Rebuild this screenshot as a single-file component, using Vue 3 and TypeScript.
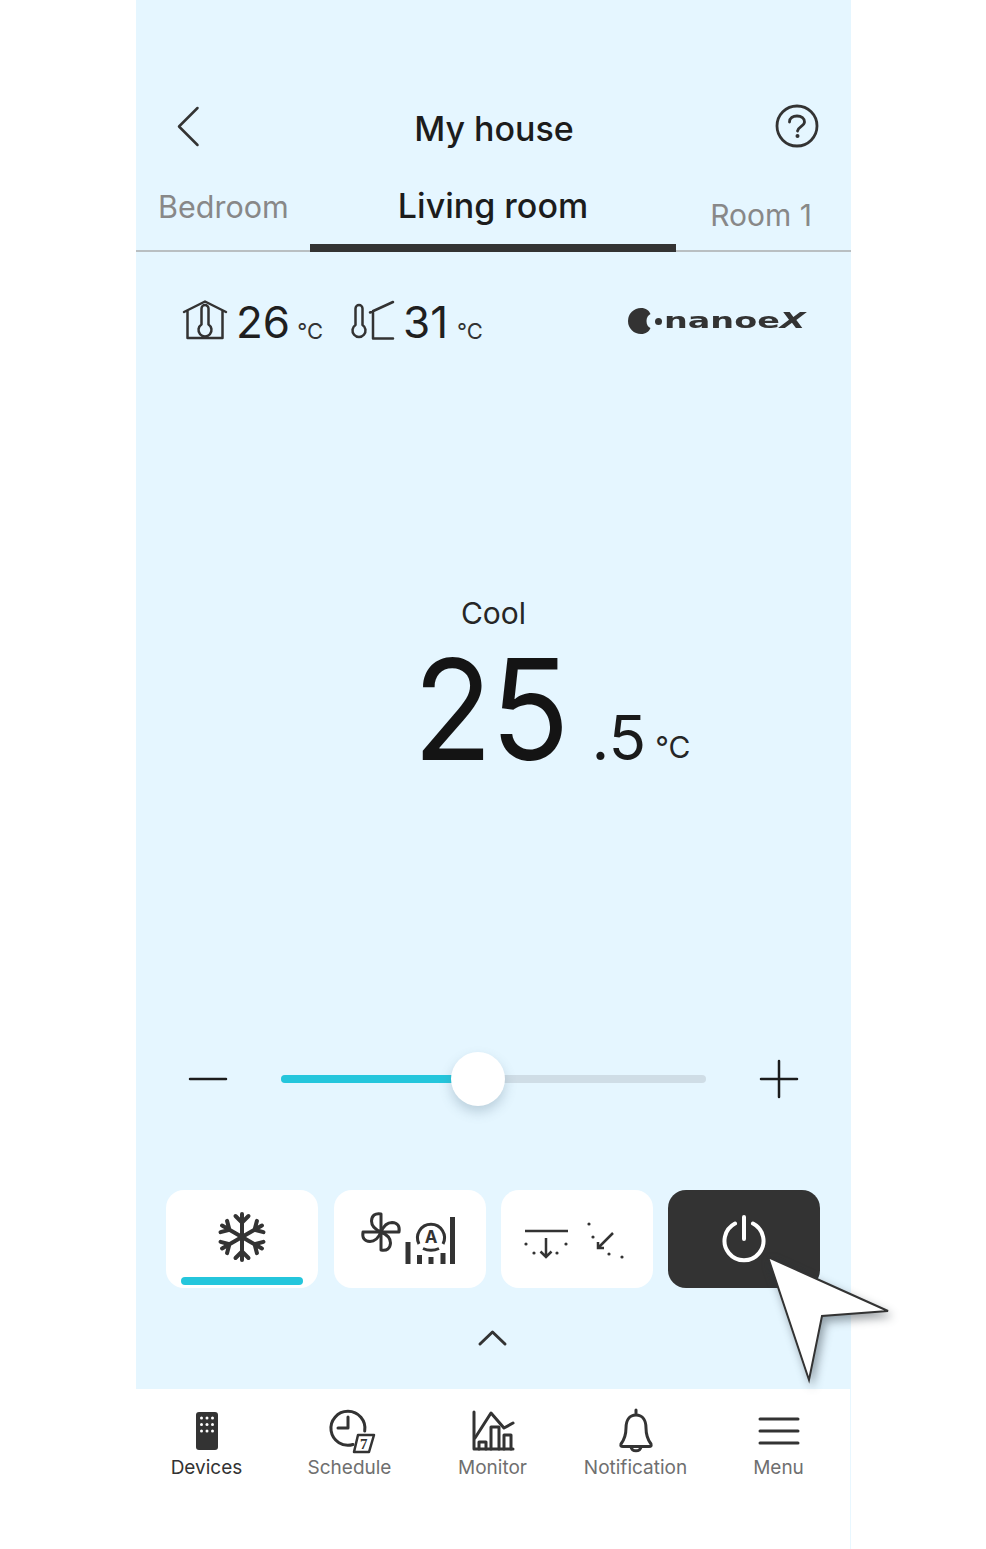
<template>
  <div class="screen">
    <main class="main">
      <header class="header">
        <svg class="back" width="24" height="42" viewBox="0 0 24 42">
          <path d="M20.500 3 L2 21.500 L20.500 40" />
        </svg>
        <h1 class="title">My house</h1>
        <svg class="help" width="44" height="44" viewBox="0 0 44 44">
          <circle cx="22" cy="22" r="20" />
          <path d="M14.500 18 C14.500 14 18 12 22 12 C26.500 12 29.500 14.500 29.500 18 C29.500 22 23 22.500 22.500 27" />
          <circle class="dot" cx="22.500" cy="32" r="2" />
        </svg>
      </header>

      <nav class="tabs">
        <span class="tab bedroom">Bedroom</span>
        <span class="tab active">Living room</span>
        <span class="tab room">Room 1</span>
      </nav>

      <section class="climate">
        <svg width="44" height="40" viewBox="0 0 44 40" class="ico">
          <path d="M1 12 L22 1.500 L43 12 M4.500 11 V38 H39.500 V11" />
          <path d="M18.500 24.500 V8.500 a3.500 3.500 0 0 1 7 0 V24.500 a6.500 6.500 0 1 1 -7 0 Z" />
        </svg>
        <span class="temp first">26</span><span class="unit">°C</span>
        <svg width="44" height="40" viewBox="0 0 44 40" class="ico outside">
          <path d="M4.500 25 V8.500 a3.500 3.500 0 0 1 7 0 V25 a6.500 6.500 0 1 1 -7 0 Z" />
          <path d="M19 12.500 L42 2 M22 11 V38.500 H42" />
        </svg>
        <span class="temp second">31</span><span class="unit outer">°C</span>
        <div class="logo">
          <svg width="26" height="26" viewBox="0 0 26 26" class="blob">
            <path d="M13 0 A13 13 0 1 0 13 26 C18 26 21 23.500 22.500 20 C20 19 18.500 16.500 18.500 13 C18.500 9.500 20 7.500 22.500 6 C21 2.500 18 0 13 0 Z" />
          </svg>
          <span class="logo-dot"></span>
          <span class="logo-text">nanoe<b>X</b></span>
        </div>
      </section>

      <section class="setpoint">
        <div class="mode">Cool</div>
        <div class="value">
          <span class="big">25</span><span class="frac">.5</span><span class="deg">°C</span>
        </div>
      </section>

      <section class="slider-row">
        <svg width="38" height="4" viewBox="0 0 38 4" class="sign"><path d="M1 2 H37" /></svg>
        <div class="track">
          <div class="fill" :style="{ width: fillPct + '%' }"></div>
          <div class="thumb" :style="{ left: fillPct + '%' }"></div>
        </div>
        <svg width="38" height="38" viewBox="0 0 38 38" class="sign"><path d="M1 19 H37 M19 1 V37" /></svg>
      </section>

      <section class="buttons">
        <button class="btn">
          <svg width="50" height="50" viewBox="-25 -25 50 50" class="snow">
            <g v-for="a in [0, 60, 120]" :key="a" :transform="`rotate(${a})`">
              <path d="M0 -23 V23 M-6.500 -21 L0 -14.500 L6.500 -21 M-6.500 21 L0 14.500 L6.500 21" />
            </g>
          </svg>
          <span class="on-bar"></span>
        </button>
        <button class="btn">
          <svg width="110" height="60" viewBox="0 0 110 60" class="fan">
            <g transform="translate(26 23)">
              <path v-for="a in [0, 90, 180, 270]" :key="a" :transform="`rotate(${a})`" d="M0 0 V-18 Q-9 -19.500 -9.500 -11 Q-9.500 -4 0 0 Z" />
            </g>
            <path class="bars" d="M53 33 V55 M64.500 46 V55 M76 48 V55 M88 44 V55 M97.500 8 V55" />
            <path class="ring" d="M64 35 A13.500 13.500 0 1 1 88 35 M68 39.500 Q76 43 84 39.500" />
            <text x="76" y="34" class="auto">A</text>
          </svg>
        </button>
        <button class="btn">
          <svg width="110" height="50" viewBox="0 0 110 50" class="swing">
            <path class="line" d="M3 17 H46" />
            <path class="line" d="M24 24 V43 M18.500 37.500 L24 43 L29.500 37.500" />
            <path class="line" d="M91 19 L76 34 M76 28 V34 H82" />
            <circle cx="4" cy="30" r="1.600" /><circle cx="12" cy="39" r="1.600" />
            <circle cx="35" cy="39" r="1.600" /><circle cx="44" cy="30" r="1.600" />
            <circle cx="67" cy="10" r="1.600" /><circle cx="71" cy="23" r="1.600" />
            <circle cx="87" cy="40" r="1.600" /><circle cx="100" cy="43" r="1.600" />
          </svg>
        </button>
        <button class="btn power">
          <svg width="44" height="46" viewBox="0 0 44 46">
            <path d="M13 8.500 A19.500 19.500 0 1 0 31 8.500 M22 2 V24" />
          </svg>
        </button>
      </section>

      <div class="more">
        <svg width="30" height="17" viewBox="0 0 30 17"><path d="M2 14 L14.500 2 L27 14" /></svg>
      </div>
    </main>

    <footer class="nav">
      <div v-for="item in navItems" :key="item.id" class="nav-item" :class="{ current: item.id === 'devices' }">
        <svg width="44" height="44" viewBox="0 0 44 44" class="nav-ico">
          <template v-if="item.id === 'devices'">
            <rect class="solid" x="11" y="3" width="22" height="38" rx="3" />
            <g class="keys">
              <circle v-for="d in keyDots" :key="d.k" :cx="d.x" :cy="d.y" r="1.500" />
            </g>
          </template>
          <template v-else-if="item.id === 'schedule'">
            <path d="M25 35.500 A17 17 0 1 1 36.700 22" />
            <path d="M20 8 V19 H10" />
            <path class="thin" d="M30 26 H46 L41 43 H26 Z" />
            <text x="32" y="40" class="seven">7</text>
          </template>
          <template v-else-if="item.id === 'monitor'">
            <path d="M3 3 V40 H42" />
            <path d="M4 29 L20 4 L33 19 L42 14" />
            <path d="M8 40 V33 H15 V40 M20 40 V18 H28 V40 M33 40 V26 H40 V40" />
          </template>
          <template v-else-if="item.id === 'bell'">
            <path d="M22 1 V6 M22 6 C15 6 12 12 12 19 C12 27 10 31 7 35 C6.500 37 7 37.500 9 37.500 H35 C37 37.500 37.500 37 37 35 C34 31 32 27 32 19 C32 12 29 6 22 6 Z" />
            <path d="M17 38 C18 43 26 43 27 38" />
          </template>
          <template v-else>
            <path d="M3 10 H41 M3 22 H41 M3 34 H41" />
          </template>
        </svg>
        <span class="nav-label">{{ item.label }}</span>
      </div>
    </footer>

    <svg class="cursor" width="140" height="140" viewBox="0 0 140 140">
      <path d="M4 4 L124 58 L58 63 L45 127 Z" />
    </svg>
  </div>
</template>

<script setup lang="ts">
type NavItem = { id: string; label: string };

const navItems: NavItem[] = [
  { id: "devices", label: "Devices" },
  { id: "schedule", label: "Schedule" },
  { id: "monitor", label: "Monitor" },
  { id: "bell", label: "Notification" },
  { id: "menu", label: "Menu" },
];

const fillPct = (197 / 425) * 100;

const keyDots: { k: string; x: number; y: number }[] = [];
for (const y of [9, 15.5, 22]) {
  for (const x of [16.5, 22, 27.5]) {
    keyDots.push({ k: `${x}-${y}`, x, y });
  }
}
</script>

<style>
body {
  margin: 0;
  background: #fff;
}
</style>

<style scoped>
.screen {
  position: relative;
  width: 715px;
  height: 1549px;
  margin-left: 136px;
  display: flex;
  flex-direction: column;
  font-family: Inter, "Noto Sans", sans-serif;
  color: #1c1c1c;
  overflow: visible;
}

.main {
  height: 1389px;
  background: #e5f6ff;
  box-sizing: border-box;
  padding-top: 104px;
}

svg {
  display: block;
  flex: none;
  overflow: visible;
}

svg path,
svg circle {
  fill: none;
  stroke: #333;
}

.header {
  height: 44px;
  padding: 0 32px 0 41px;
  display: flex;
  align-items: center;
  justify-content: space-between;
}

.back path {
  stroke-width: 2.5;
  stroke-linecap: round;
  stroke-linejoin: round;
}

.title {
  margin: 6px 0 0 0;
  font-size: 34px;
  line-height: 44px;
  font-weight: 500;
  color: #1c1c1c;
  position: relative;
  left: 6px;
}

.help circle,
.help path {
  stroke-width: 2.8;
  stroke-linecap: round;
}

.help .dot {
  fill: #333;
  stroke: none;
}

.tabs {
  height: 104px;
  box-sizing: border-box;
  display: grid;
  grid-template-columns: 174px 366px 175px;
  border-bottom: 2px solid #b9bfc2;
}

.tab {
  font-size: 30px;
  line-height: 40px;
  color: #888;
  padding-top: 39px;
  text-align: center;
  height: 102px;
  box-sizing: border-box;
}

.tab.bedroom {
  text-align: left;
  padding-left: 22px;
  font-size: 30.5px;
}

.tab.active {
  font-size: 34px;
  font-weight: 500;
  color: #1c1c1c;
  border-bottom: 8px solid #333;
  height: 104px;
  padding-top: 38px;
}

.tab.room {
  padding: 47px 39px 0 0;
  text-align: right;
}

.climate {
  margin-top: 47px;
  height: 46px;
  padding: 0 47px;
  display: flex;
  align-items: flex-start;
}

.ico path {
  stroke-width: 2.5;
  stroke-linecap: round;
  stroke-linejoin: round;
}

.ico {
  margin-top: 1px;
}

.ico.outside {
  margin-left: 28px;
}

.temp {
  font-size: 44px;
  line-height: 46px;
  margin-left: 9px;
  color: #1f1f1f;
}

.temp.second {
  margin-left: 8px;
}

.unit {
  font-size: 22px;
  line-height: 26px;
  margin: 19px 0 0 7px;
  color: #333;
}

.unit.outer {
  margin-left: 9px;
}

.logo {
  margin-left: auto;
  margin-top: -1px;
  display: flex;
  align-items: center;
  height: 46px;
  color: #333;
}

.blob path {
  fill: #333;
  stroke: none;
}

.logo-dot {
  width: 7px;
  height: 7px;
  border-radius: 50%;
  background: #333;
  margin: 0 2px 0 1px;
}

.logo-text {
  font-family: "DejaVu Sans", sans-serif;
  font-weight: 700;
  font-size: 22px;
  line-height: 26px;
  transform: scaleX(1.52);
  transform-origin: left center;
  width: 140px;
  white-space: nowrap;
}

.logo-text b {
  font-style: italic;
}

.setpoint {
  margin-top: 250px;
  height: 457px;
}

.mode {
  text-align: center;
  font-size: 30px;
  line-height: 36px;
  color: #262626;
}

.value {
  margin: 23px 0 0 277px;
  display: flex;
  align-items: baseline;
  height: 110px;
  line-height: 110px;
}

.big {
  font-size: 140px;
  letter-spacing: -2px;
  color: #141414;
  transform: scaleX(0.93);
  transform-origin: left center;
}

.frac {
  font-size: 62px;
  margin-left: 12px;
  color: #1a1a1a;
}

.deg {
  font-size: 30px;
  margin-left: 9px;
  color: #262626;
  transform: translateY(-2px);
}

.slider-row {
  height: 54px;
  padding: 0 53px;
  display: flex;
  align-items: center;
  justify-content: space-between;
}

.sign path {
  stroke: #1c1c1c;
  stroke-width: 2.5;
  stroke-linecap: round;
}

.track {
  position: relative;
  width: 425px;
  height: 8px;
  border-radius: 4px;
  background: #cfdde6;
}

.fill {
  height: 100%;
  border-radius: 4px;
  background: #24c6dc;
}

.thumb {
  position: absolute;
  top: 50%;
  width: 54px;
  height: 54px;
  margin-left: -27px;
  margin-top: -27px;
  border-radius: 50%;
  background: #fff;
  box-shadow: 0 6px 12px rgba(90, 120, 140, 0.3);
}

.buttons {
  margin-top: 84px;
  padding-left: 30.4px;
  display: grid;
  grid-template-columns: repeat(4, 152px);
  column-gap: 15.2px;
}

.btn {
  position: relative;
  height: 98px;
  border: 0;
  padding: 0;
  border-radius: 18px;
  background: #fff;
  display: flex;
  align-items: center;
  justify-content: center;
}

.btn.power {
  background: #333;
}

.power svg {
  margin-top: -2px;
}

.power path {
  stroke: #fff;
  stroke-width: 4;
  stroke-linecap: round;
}

.snow {
  margin-top: -4px;
}

.snow path {
  stroke-width: 4;
  stroke-linecap: round;
  stroke-linejoin: round;
}

.on-bar {
  position: absolute;
  left: 15px;
  right: 15px;
  bottom: 3px;
  height: 8px;
  border-radius: 4px;
  background: #24c6dc;
}

.fan path {
  stroke-width: 3;
  stroke-linejoin: round;
}

.fan .bars {
  stroke-width: 5;
}

.fan .ring {
  stroke-width: 3;
  stroke-linecap: butt;
}

.auto {
  font-family: Inter, sans-serif;
  font-size: 17px;
  font-weight: 700;
  text-anchor: middle;
  fill: #333;
}

.swing circle {
  fill: #333;
  stroke: none;
}

.swing .line {
  stroke-width: 2.5;
}

.more {
  margin-top: 42px;
  padding-right: 1px;
  display: flex;
  justify-content: center;
}

.more path {
  stroke-width: 3;
  stroke-linecap: round;
  stroke-linejoin: round;
}

.nav {
  flex: 1;
  display: grid;
  grid-template-columns: repeat(5, 143px);
  margin-left: -1px;
  background: #fff;
  border-right: 1px solid #e8f7ff;
  padding-top: 20px;
}

.nav-item {
  display: flex;
  flex-direction: column;
  align-items: center;
  color: #6f6f6f;
}

.nav-item.current {
  color: #333;
}

.nav-ico path {
  stroke-width: 3;
  stroke-linecap: round;
  stroke-linejoin: round;
}

.nav-ico .thin {
  stroke-width: 2.5;
}

.nav-ico .solid {
  fill: #333;
}

.keys circle {
  fill: #fff;
  stroke: none;
}

.seven {
  font-family: "Liberation Serif", serif;
  font-size: 15px;
  font-weight: 700;
  fill: #333;
}

.nav-label {
  margin-top: 2px;
  font-size: 19px;
  line-height: 26px;
}

.cursor {
  position: absolute;
  left: 628px;
  top: 1253px;
  overflow: visible;
  filter: drop-shadow(3px 5px 5px rgba(40, 50, 60, 0.45));
}

.cursor path {
  fill: #fff;
  stroke: #333;
  stroke-width: 2;
  stroke-linejoin: miter;
}
</style>
